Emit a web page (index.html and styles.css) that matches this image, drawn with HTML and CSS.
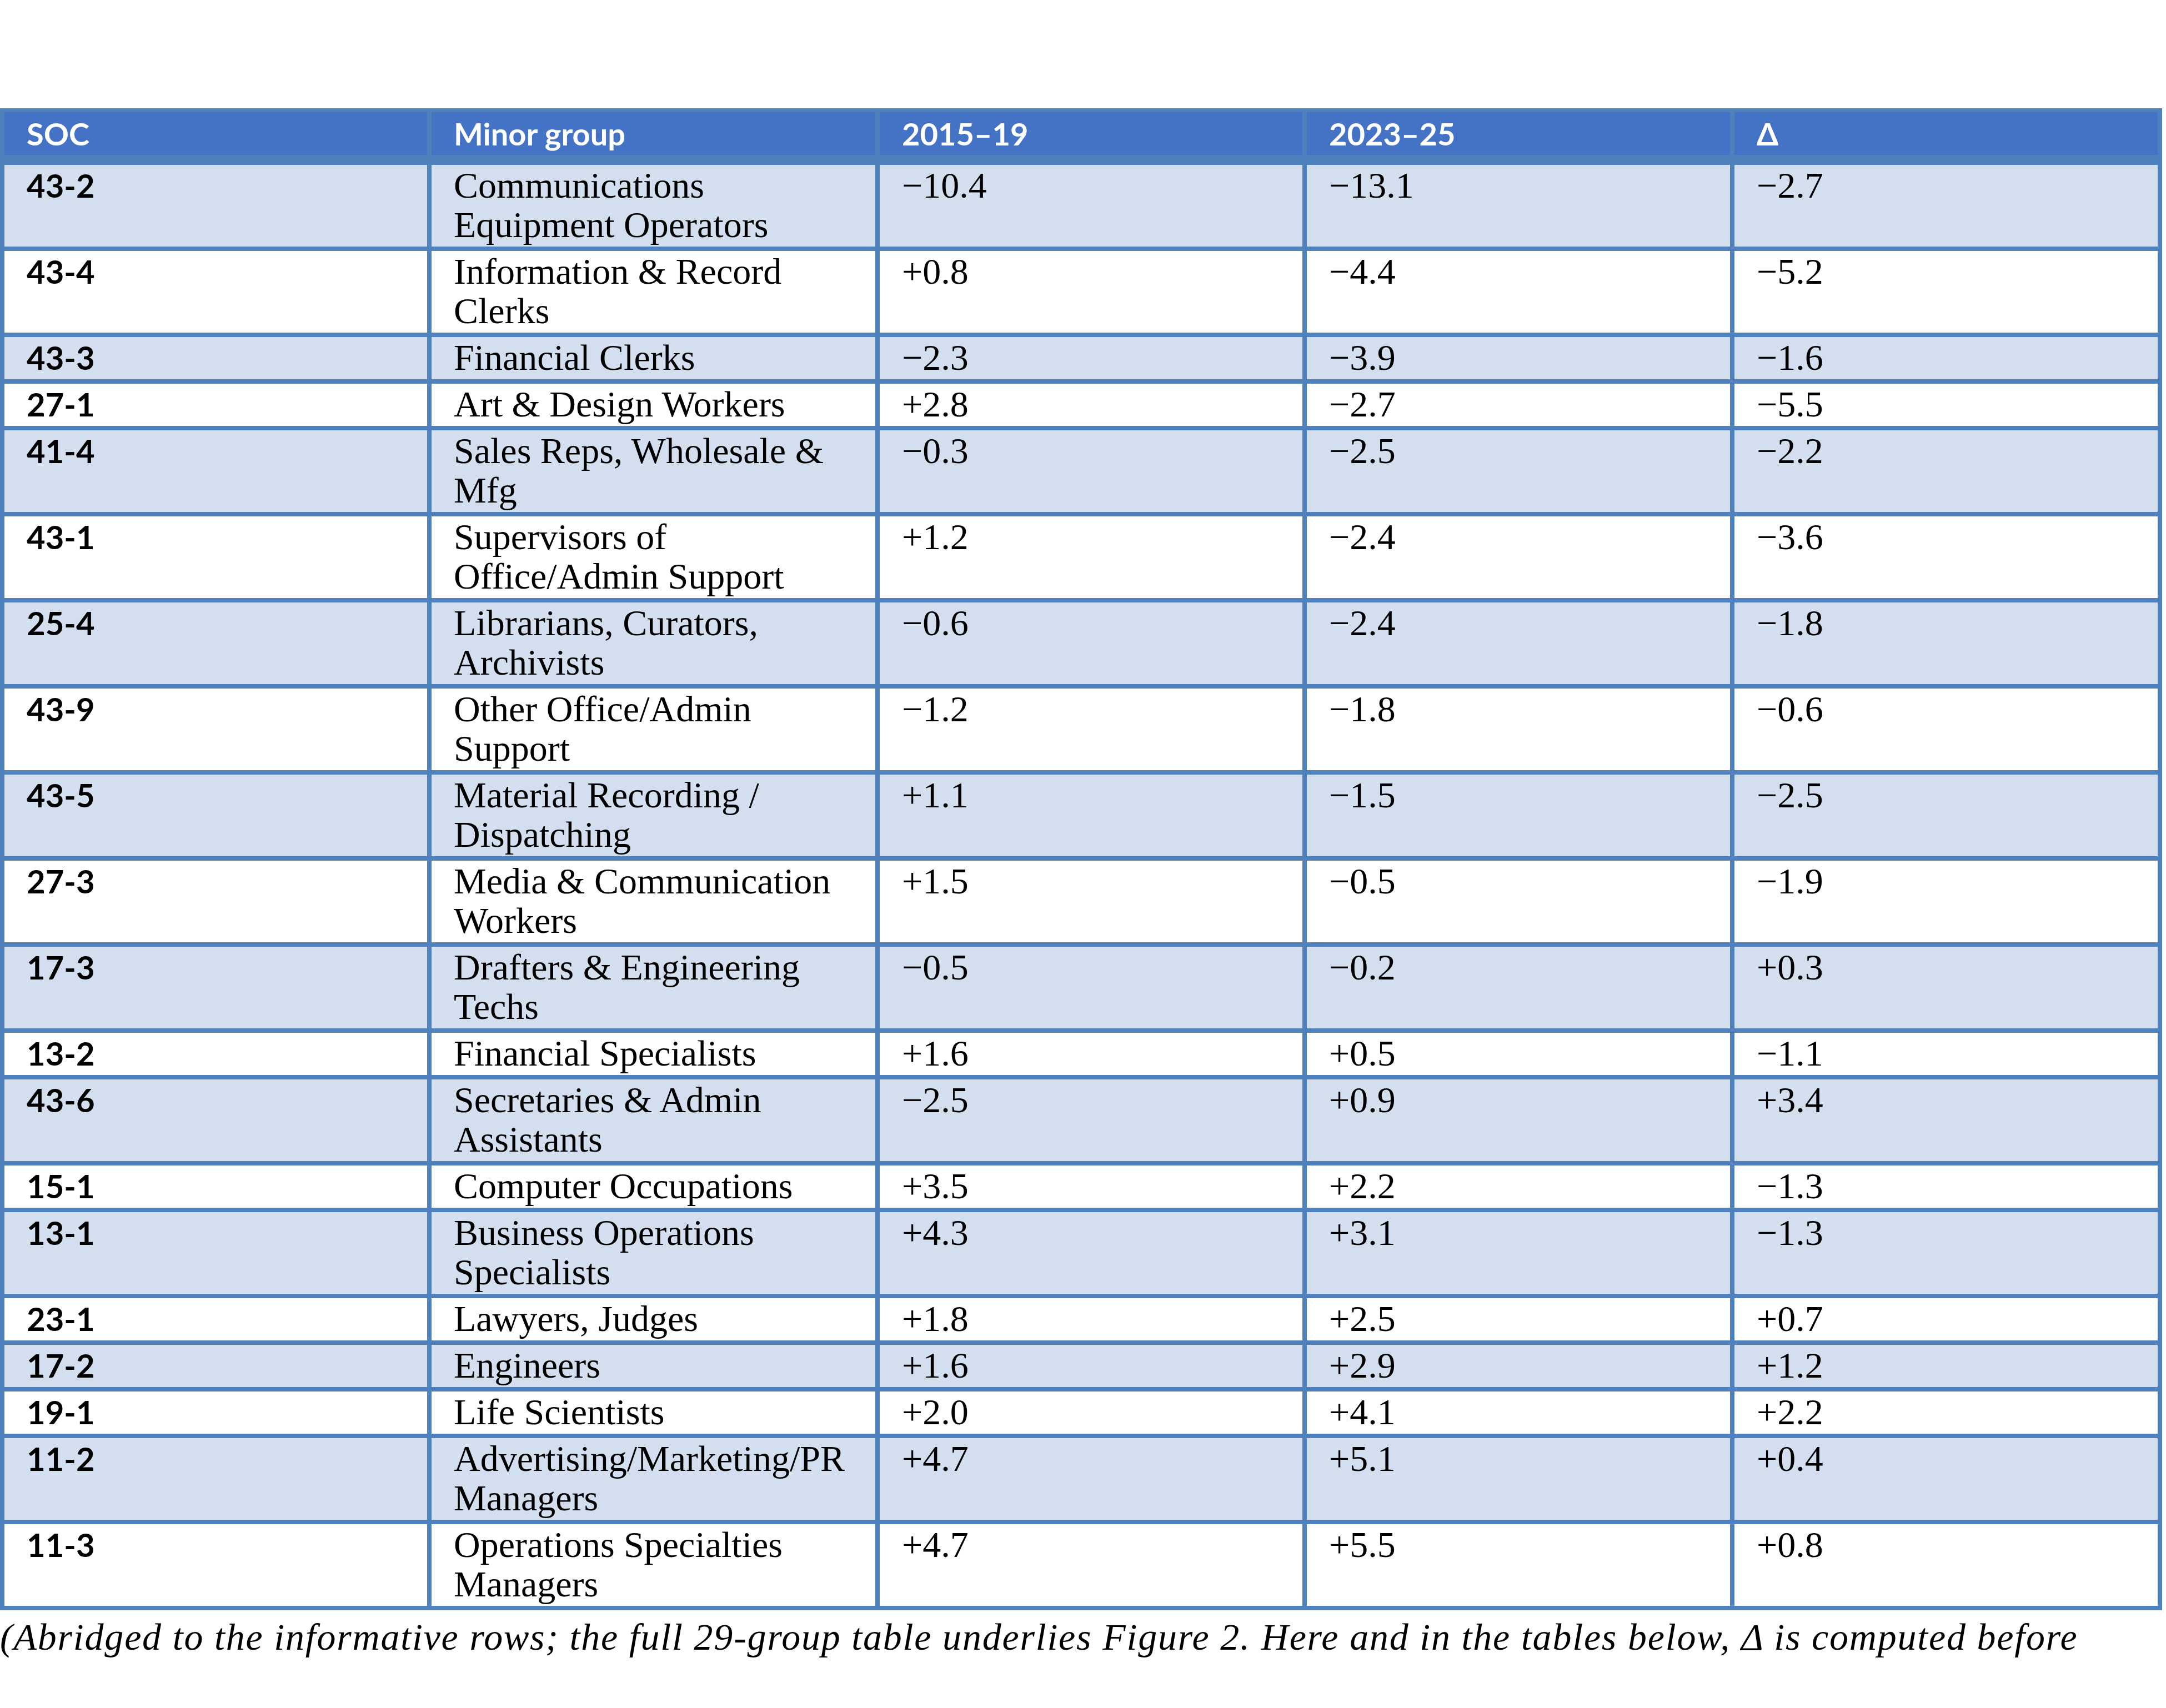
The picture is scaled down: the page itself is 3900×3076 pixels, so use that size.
FILE: index.html
```html
<!DOCTYPE html>
<html lang="en">
<head>
<meta charset="utf-8">
<title>SOC minor groups</title>
<link rel="stylesheet" href="styles.css">
</head>
<body>
<main class="page">
  <table class="soc-table">
    <thead>
      <tr>
        <th class="c1">SOC</th>
        <th class="c2">Minor group</th>
        <th class="c3">2015–19</th>
        <th class="c4">2023–25</th>
        <th class="c5">Δ</th>
      </tr>
    </thead>
    <tbody>
      <tr class="band"><td class="soc">43-2</td><td>Communications<br>Equipment Operators</td><td>−10.4</td><td>−13.1</td><td>−2.7</td></tr>
      <tr><td class="soc">43-4</td><td>Information &amp; Record<br>Clerks</td><td>+0.8</td><td>−4.4</td><td>−5.2</td></tr>
      <tr class="band"><td class="soc">43-3</td><td>Financial Clerks</td><td>−2.3</td><td>−3.9</td><td>−1.6</td></tr>
      <tr><td class="soc">27-1</td><td>Art &amp; Design Workers</td><td>+2.8</td><td>−2.7</td><td>−5.5</td></tr>
      <tr class="band"><td class="soc">41-4</td><td>Sales Reps, Wholesale &amp;<br>Mfg</td><td>−0.3</td><td>−2.5</td><td>−2.2</td></tr>
      <tr><td class="soc">43-1</td><td>Supervisors of<br>Office/Admin Support</td><td>+1.2</td><td>−2.4</td><td>−3.6</td></tr>
      <tr class="band"><td class="soc">25-4</td><td>Librarians, Curators,<br>Archivists</td><td>−0.6</td><td>−2.4</td><td>−1.8</td></tr>
      <tr><td class="soc">43-9</td><td>Other Office/Admin<br>Support</td><td>−1.2</td><td>−1.8</td><td>−0.6</td></tr>
      <tr class="band"><td class="soc">43-5</td><td>Material Recording /<br>Dispatching</td><td>+1.1</td><td>−1.5</td><td>−2.5</td></tr>
      <tr><td class="soc">27-3</td><td>Media &amp; Communication<br>Workers</td><td>+1.5</td><td>−0.5</td><td>−1.9</td></tr>
      <tr class="band"><td class="soc">17-3</td><td>Drafters &amp; Engineering<br>Techs</td><td>−0.5</td><td>−0.2</td><td>+0.3</td></tr>
      <tr><td class="soc">13-2</td><td>Financial Specialists</td><td>+1.6</td><td>+0.5</td><td>−1.1</td></tr>
      <tr class="band"><td class="soc">43-6</td><td>Secretaries &amp; Admin<br>Assistants</td><td>−2.5</td><td>+0.9</td><td>+3.4</td></tr>
      <tr><td class="soc">15-1</td><td>Computer Occupations</td><td>+3.5</td><td>+2.2</td><td>−1.3</td></tr>
      <tr class="band"><td class="soc">13-1</td><td>Business Operations<br>Specialists</td><td>+4.3</td><td>+3.1</td><td>−1.3</td></tr>
      <tr><td class="soc">23-1</td><td>Lawyers, Judges</td><td>+1.8</td><td>+2.5</td><td>+0.7</td></tr>
      <tr class="band"><td class="soc">17-2</td><td>Engineers</td><td>+1.6</td><td>+2.9</td><td>+1.2</td></tr>
      <tr><td class="soc">19-1</td><td>Life Scientists</td><td>+2.0</td><td>+4.1</td><td>+2.2</td></tr>
      <tr class="band"><td class="soc">11-2</td><td>Advertising/Marketing/PR<br>Managers</td><td>+4.7</td><td>+5.1</td><td>+0.4</td></tr>
      <tr><td class="soc">11-3</td><td>Operations Specialties<br>Managers</td><td>+4.7</td><td>+5.5</td><td>+0.8</td></tr>
    </tbody>
  </table>
  <p class="caption">(Abridged to the informative rows; the full 29-group table underlies Figure 2. Here and in the tables below, Δ is computed before</p>
</main>
</body>
</html>
```

FILE: styles.css
```css
*,
*::before,
*::after {
  box-sizing: border-box;
}

html,
body {
  margin: 0;
  padding: 0;
  background: #ffffff;
}

.page {
  padding-top: 195px;
  width: 3900px;
  overflow: hidden;
}

.soc-table {
  table-layout: fixed;
  width: 3893px;
  border-collapse: separate;
  border-spacing: 0;
  border-top: 7px solid #4f81bd;
  border-left: 8px solid #4f81bd;
  font-family: "Liberation Serif", "Times New Roman", serif;
  font-size: 66px;
  line-height: 71px;
  color: #000000;
}

.soc-table th,
.soc-table td {
  border-right: 8px solid #4f81bd;
  border-bottom: 8px solid #4f81bd;
  padding: 1px 20px 4px 40px;
  text-align: left;
  vertical-align: top;
}

.soc-table th {
  background: #4472c4;
  color: #ffffff;
  font-family: Lato, "Open Sans", sans-serif;
  font-weight: 700;
  font-size: 56px;
  line-height: 77px;
  height: 95px;
  padding-top: 0;
  padding-bottom: 0;
  border-bottom-width: 18px;
}

.c1 { width: 769px; }
.c2 { width: 807px; }
.c3 { width: 769px; }
.c4 { width: 770px; }
.c5 { width: 770px; }

.soc-table td.soc {
  font-family: Lato, "Open Sans", sans-serif;
  font-weight: 700;
  font-size: 58px;
}

.soc-table tr.band td {
  background: #d3dfee;
}

.caption {
  margin: 9px 0 0 0;
  font-family: "Liberation Serif", "Times New Roman", serif;
  font-style: italic;
  font-size: 68px;
  line-height: 78px;
  letter-spacing: 1.8px;
  white-space: nowrap;
  color: #000000;
}
```
